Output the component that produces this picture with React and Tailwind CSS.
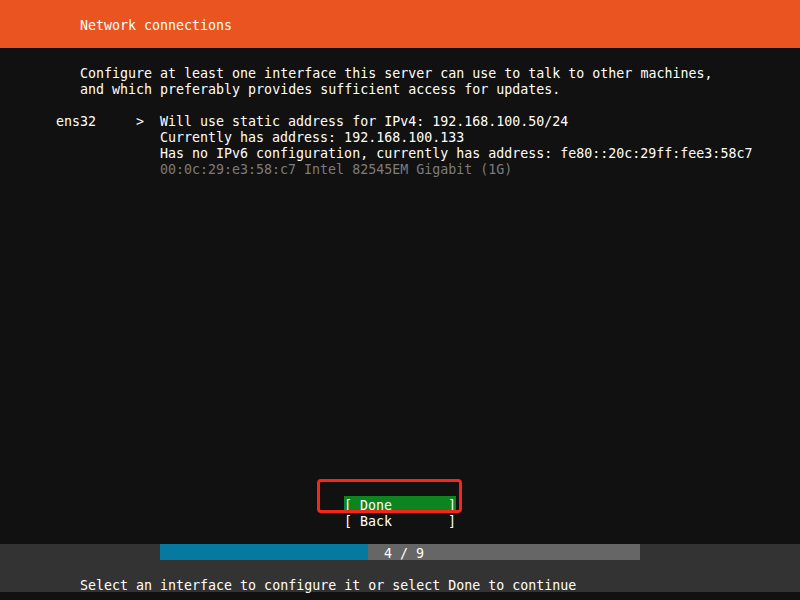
import React from 'react';

const Line = ({ children, className = '' }) => (
  <div className={`h-4 whitespace-pre ${className}`}>
    <span className="relative top-[2px]">{children}</span>
  </div>
);

const App = () => {
  return (
    <div
      className="relative flex h-[600px] w-[800px] flex-col bg-[#111111] text-[13.3px] leading-4 text-white"
      style={{ fontFamily: '"DejaVu Sans Mono", "Liberation Mono", monospace' }}
    >
      {/* Header */}
      <div className="h-12 bg-[#E95420] pl-[80px] pt-4">
        <Line>Network connections</Line>
      </div>

      {/* Intro */}
      <div className="pl-[80px] pt-4">
        <Line>Configure at least one interface this server can use to talk to other machines,</Line>
        <Line>and which preferably provides sufficient access for updates.</Line>
      </div>

      {/* Interface */}
      <div className="flex pl-[56px] pt-4">
        <Line className="w-[80px]">ens32</Line>
        <Line className="w-[24px]">&gt;</Line>
        <div>
          <Line>Will use static address for IPv4: 192.168.100.50/24</Line>
          <Line>Currently has address: 192.168.100.133</Line>
          <Line>Has no IPv6 configuration, currently has address: fe80::20c:29ff:fee3:58c7</Line>
          <Line className="text-[#7c7c7c]">00:0c:29:e3:58:c7 Intel 82545EM Gigabit (1G)</Line>
        </div>
      </div>

      <div className="flex-1" />

      {/* Buttons */}
      <div className="flex flex-col pl-[344px]">
        <Line className="w-[112px] bg-[#0E8420]">[ Done       ]</Line>
        <Line className="w-[112px]">[ Back       ]</Line>
      </div>

      <div className="h-4" />

      {/* Footer */}
      <div className="h-12 bg-[#333333]">
        <div className="ml-[160px] flex h-4 w-[480px] bg-[#666666]">
          <div className="h-4 w-[208px] bg-[#0679A0]" />
          <Line className="pl-4">4 / 9</Line>
        </div>
        <div className="h-4" />
        <Line className="pl-[80px]">Select an interface to configure it or select Done to continue</Line>
      </div>
      <div className="h-2" />

      {/* Annotation */}
      <div className="absolute left-[317px] top-[479px] h-[34px] w-[145px] rounded-[4px] border-[3px] border-[#F5261B]" />
    </div>
  );
};

export default App;
